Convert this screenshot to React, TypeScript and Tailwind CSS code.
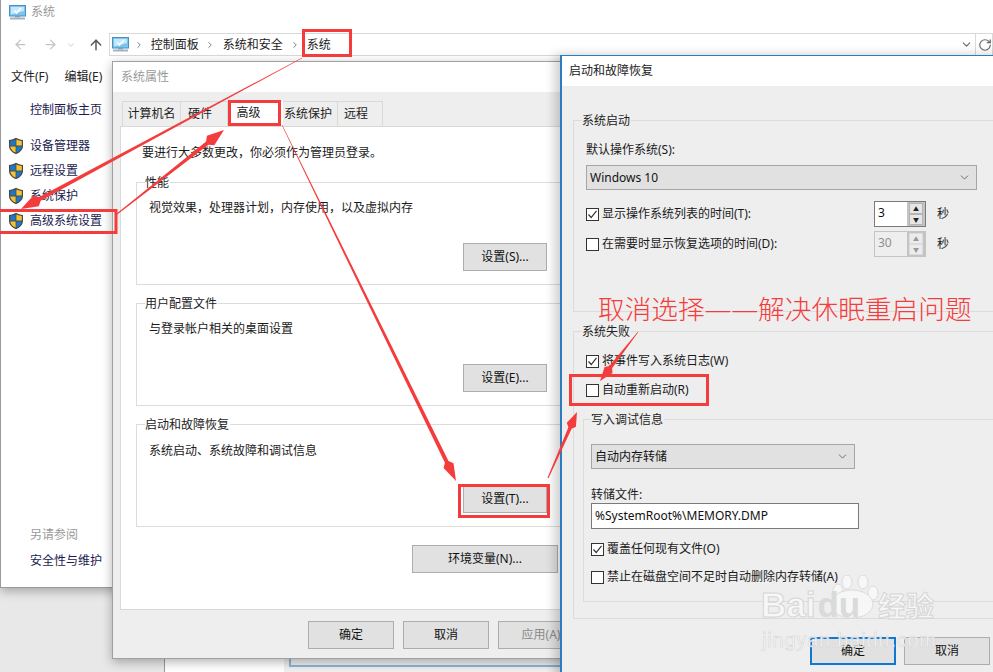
import React from "react";
import { ArrowLeft, ArrowRight, ArrowUp, ChevronDown, ChevronRight, RotateCw } from "lucide-react";

const FONT = "font-['Noto_Sans','Noto_Sans_CJK_SC',sans-serif]";

function Shield() {
  return (
    <svg width="16" height="18" viewBox="0 0 16 18" className="shrink-0">
      <path d="M8 .8 C10 2 12.5 2.8 15 3 V9 C15 13 11.5 15.8 8 17.2 C4.5 15.8 1 13 1 9 V3 C3.5 2.8 6 2 8 .8 Z" fill="#4a4a4a" />
      <path d="M7.6 2.4 C6 3.2 4 3.8 2.2 4 V8.6 H7.6 Z" fill="#1d78c8" />
      <path d="M8.4 2.4 C10 3.2 12 3.8 13.8 4 V8.6 H8.4 Z" fill="#f4c430" />
      <path d="M2.2 9.4 H7.6 V15.6 C5 14.6 2.6 12.4 2.2 9.4 Z" fill="#f4c430" />
      <path d="M8.4 9.4 H13.8 C13.4 12.4 11 14.6 8.4 15.6 Z" fill="#1d78c8" />
    </svg>
  );
}

function Monitor() {
  return (
    <svg width="17" height="15" viewBox="0 0 17 15" className="shrink-0">
      <rect x="0.5" y="0.5" width="16" height="10.5" fill="#7cc4ee" stroke="#4a90c0" />
      <path d="M2 2 H15 V6 L2 9.5 Z" fill="#c4e8fa" />
      <path d="M5.5 5.5 L7.5 8 L12 3" fill="none" stroke="#fff" strokeWidth="1.6" />
      <rect x="6" y="11" width="5" height="1.5" fill="#8aa0b0" />
      <rect x="1" y="12.5" width="15" height="2" fill="#9db4c4" />
    </svg>
  );
}

function SideItem({ label }: { label: string }) {
  return (
    <div className="flex h-[25px] items-center gap-[6px] pl-[7px] text-[#1b1b50]">
      <Shield />
      <span>{label}</span>
    </div>
  );
}

function Btn({ label, w = "w-[86px]", disabled = false, className = "" }: { label: string; w?: string; disabled?: boolean; className?: string }) {
  return (
    <div className={`flex h-[28px] shrink-0 items-center justify-center border border-[#adadad] bg-[#e1e1e1] ${w} ${disabled ? "text-[#8a8a8a]" : "text-[#111]"} ${className}`}>
      {label}
    </div>
  );
}

function Group({ legend, className = "", bg = "bg-white", legendLeft = "left-[8px]", children }: { legend: string; className?: string; bg?: string; legendLeft?: string; children?: React.ReactNode }) {
  return (
    <div className={`relative flex flex-col border border-[#dcdcdc] ${className}`}>
      <span className={`absolute -top-[8px] h-[16px] whitespace-nowrap leading-[16px] ${legendLeft} ${bg} pr-[1px] text-[#222]`}>{legend}</span>
      {children}
    </div>
  );
}

function Check({ checked = false, label, className = "" }: { checked?: boolean; label: string; className?: string }) {
  return (
    <div className={`flex items-center gap-[3px] whitespace-nowrap text-[#1a1a1a] ${className}`}>
      <span className="flex h-[13px] w-[13px] shrink-0 items-center justify-center border border-[#333] bg-white">
        {checked && (
          <svg width="11" height="11" viewBox="0 0 11 11">
            <path d="M1.5 5.5 L4.2 8.5 L9.5 1.8" fill="none" stroke="#333" strokeWidth="1.2" />
          </svg>
        )}
      </span>
      <span>{label}</span>
    </div>
  );
}

function Spin({ value, disabled = false }: { value: string; disabled?: boolean }) {
  const arrow = disabled ? "border-[#dcdcdc] bg-[#ececec] text-[#999]" : "border-[#b4b4b4] bg-[#e6e6e6] text-[#222]";
  return (
    <div className={`flex h-[26px] w-[52px] shrink-0 border ${disabled ? "border-[#c4c4c4] text-[#8f8f8f]" : "border-[#7a7a7a] text-[#111]"}`}>
      <div className={`flex flex-1 items-center pb-[2px] pl-[3px] ${disabled ? "" : "bg-white"}`}>{value}</div>
      <div className="flex w-[18px] flex-col border-l-2 border-r-2 border-[#c4c4c4] bg-[#c4c4c4] py-[1px]">
        <div className={`flex flex-1 items-center justify-center border text-[6px] leading-none ${arrow}`}>▲</div>
        <div className={`flex flex-1 items-center justify-center border text-[6px] leading-none ${arrow}`}>▼</div>
      </div>
    </div>
  );
}

function Select({ label, w, h }: { label: string; w: string; h: string }) {
  return (
    <div className={`flex items-center justify-between border border-[#a6a6a6] bg-[#e1e1e1] pl-[3px] pr-[5px] text-[#111] ${w} ${h}`}>
      <span>{label}</span>
      <ChevronDown size={13} strokeWidth={1.2} color="#333" />
    </div>
  );
}

function taper(x1: number, y1: number, x2: number, y2: number, w1: number, w2: number, hl: number, hw: number) {
  const dx = x2 - x1;
  const dy = y2 - y1;
  const len = Math.hypot(dx, dy);
  const ux = dx / len;
  const uy = dy / len;
  const nx = -uy;
  const ny = ux;
  const bx = x2 - ux * hl;
  const by = y2 - uy * hl;
  const sx = x2 - ux * hl * 1.25;
  const sy = y2 - uy * hl * 1.25;
  const p = (x: number, y: number) => `${x.toFixed(1)},${y.toFixed(1)}`;
  return [
    p(x1 + (nx * w1) / 2, y1 + (ny * w1) / 2),
    p(sx + (nx * w2) / 2, sy + (ny * w2) / 2),
    p(bx + (nx * hw) / 2, by + (ny * hw) / 2),
    p(x2, y2),
    p(bx - (nx * hw) / 2, by - (ny * hw) / 2),
    p(sx - (nx * w2) / 2, sy - (ny * w2) / 2),
    p(x1 - (nx * w1) / 2, y1 - (ny * w1) / 2),
  ].join(" ");
}

function Marks() {
  const arrows = [
    taper(302, 58, 21, 209, 0.4, 4, 17, 12),
    taper(117, 214, 224, 130, 1, 4, 17, 12),
    taper(282, 125, 456, 481, 0.6, 4, 17, 11),
    taper(548, 478, 577, 412, 1, 3.5, 14, 10),
    taper(638, 332, 600, 381, 0.6, 3.5, 14, 10),
  ];
  return (
    <svg width="993" height="672" viewBox="0 0 993 672" className="pointer-events-none absolute left-0 top-0">
      {arrows.map((pts) => (
        <polygon key={pts} points={pts} fill="#f53c3c" />
      ))}
      <g fill="none" stroke="#f53c3c" strokeWidth="3">
        <rect x="303.5" y="30.5" width="47" height="25" />
        <rect x="229.5" y="101.5" width="50" height="23" />
        <rect x="-2" y="210.5" width="118" height="22" />
        <rect x="459.5" y="485.5" width="89" height="31" />
        <rect x="570.5" y="375.5" width="137" height="29" />
      </g>
    </svg>
  );
}

function Watermark() {
  return (
    <div className="pointer-events-none absolute left-[760px] top-[575px] h-[76px] w-[182px] text-[#f8f8f8] opacity-90">
      <svg width="66" height="46" viewBox="0 0 66 46" className="absolute left-[68px] top-0" fill="#f8f8f8" stroke="#dadada" strokeWidth="1">
        <ellipse cx="10" cy="16" rx="5" ry="7" />
        <ellipse cx="19" cy="7" rx="5" ry="7" />
        <ellipse cx="35" cy="7" rx="5" ry="7" />
        <ellipse cx="45" cy="18" rx="5" ry="7" />
        <ellipse cx="24" cy="29" rx="21" ry="14" />
      </svg>
      <span className="absolute left-[1px] top-[10px] flex whitespace-nowrap font-['Liberation_Sans',sans-serif] text-[35px] font-bold leading-[40px] [-webkit-text-stroke:1px_#d4d4d4]">
        Bai<span className="ml-[2px] text-[#d8d8d8] [-webkit-text-stroke:0px]">du</span>
      </span>
      <span className="absolute left-[118px] top-[14px] whitespace-nowrap text-[28px] font-bold leading-[34px] [-webkit-text-stroke:1px_#d4d4d4]">经验</span>
      <span className="absolute left-[2px] top-[54px] whitespace-nowrap font-['Liberation_Sans',sans-serif] text-[20px] leading-[22px] tracking-[0.8px] [-webkit-text-stroke:0.6px_#d4d4d4]">jingyan.baidu.com</span>
    </div>
  );
}

export default function App() {
  return (
    <div className={`relative h-[672px] w-[993px] overflow-hidden bg-[#e8e8e8] text-[12px] leading-[16px] ${FONT}`}>
      {/* window behind everything */}
      <div className="absolute left-[164px] top-[580px] h-[100px] w-[840px] border-l border-[#9a9a9a] bg-white" />
      <div className="absolute left-[284px] top-[640px] h-[40px] w-[720px] bg-[#efefef]" />
      <div className="absolute left-[289px] top-[640px] h-[27px] w-[700px] border-b-2 border-l-2 border-[#8fb4d4] bg-[#efefef]" />

      {/* control panel window */}
      <div className="absolute left-0 top-0 flex h-[588px] w-[993px] flex-col border-b border-l border-[#9a9a9a] bg-white shadow-[0_3px_10px_rgba(0,0,0,0.3)]">
        <div className="flex h-[24px] items-center gap-[5px] pl-[8px] text-[#9a9a9a]">
          <Monitor />
          <span>系统</span>
        </div>
        <div className="flex h-[42px] items-start pt-[9px]">
          <div className="flex h-[23px] w-[108px] items-center text-[#c4c4c4]">
            <ArrowLeft size={15} strokeWidth={2} className="ml-[12px]" />
            <ArrowRight size={15} strokeWidth={2} className="ml-[15px]" />
            <ChevronDown size={10} strokeWidth={2} className="ml-[8px]" />
            <ArrowUp size={16} strokeWidth={2.2} className="ml-[12px] text-[#555]" />
          </div>
          <div className="flex h-[23px] w-[870px] items-center border border-[#d9d9d9] pl-[2px] text-[#222]">
            <Monitor />
            <ChevronRight size={10} strokeWidth={2} className="ml-[5px] text-[#666]" />
            <span className="ml-[7px]">控制面板</span>
            <ChevronRight size={10} strokeWidth={2} className="ml-[6px] text-[#666]" />
            <span className="ml-[8px]">系统和安全</span>
            <ChevronRight size={10} strokeWidth={2} className="ml-[7px] text-[#666]" />
            <span className="ml-[7px]">系统</span>
            <ChevronDown size={13} strokeWidth={2} className="ml-auto mr-[2px] text-[#666]" />
          </div>
          <div className="flex h-[23px] items-center border-b border-r border-t border-[#d9d9d9] pl-[2px]">
            <RotateCw size={14} className="text-[#666]" />
          </div>
        </div>
        <div className="flex h-[20px] items-center gap-[16px] pb-0 pl-[10px] pt-[2px] text-[#222]">
          <span>文件(F)</span>
          <span>编辑(E)</span>
        </div>
        <div className="mt-[16px] flex flex-1 flex-col pb-[18px]">
          <div className="pl-[29px] text-[#1b1b50]">控制面板主页</div>
          <div className="mt-[15px] flex flex-col">
            <SideItem label="设备管理器" />
            <SideItem label="远程设置" />
            <SideItem label="系统保护" />
            <SideItem label="高级系统设置" />
          </div>
          <div className="mt-auto pl-[29px] text-[#9a9a9a]">另请参阅</div>
          <div className="mt-[10px] pl-[29px] text-[#1b1b50]">安全性与维护</div>
        </div>
      </div>

      {/* system properties dialog */}
      <div className="absolute left-[112px] top-[61px] flex h-[598px] w-[470px] flex-col border border-[#a0a0a0] bg-[#eeeeee] shadow-[0_3px_10px_rgba(0,0,0,0.3)]">
        <div className="flex h-[30px] items-center bg-white pl-[8px] text-[#9a9a9a]">系统属性</div>
        <div className="ml-[9px] mt-[9px] flex h-[25px] items-stretch">
          <div className="flex w-[59px] items-center justify-center border border-b-0 border-[#d9d9d9] text-[#222]">计算机名</div>
          <div className="flex w-[47px] items-center justify-center border-r border-t border-[#d9d9d9] pr-[8px] text-[#222]">硬件</div>
          <div className="flex w-[55px] items-center justify-center bg-white pb-[1px] pr-[14px] text-[#222]">高级</div>
          <div className="flex w-[54px] items-center justify-center border-t border-[#d9d9d9] pr-[4px] text-[#222]">系统保护</div>
          <div className="flex w-[46px] items-center justify-center border-l border-r border-t border-[#d9d9d9] pr-[8px] text-[#222]">远程</div>
        </div>
        <div className="ml-[7px] flex h-[484px] w-[470px] flex-col border border-[#d9d9d9] bg-white">
          <div className="ml-[21px] mt-[18px] text-[#1a1a1a]">要进行大多数更改，你必须作为管理员登录。</div>
          <div className="ml-[15px] mt-[21px] flex flex-col gap-[18px]">
            <Group legend="性能" className="h-[103px] w-[430px]">
              <div className="ml-[12px] mt-[17px] text-[#1a1a1a]">视觉效果，处理器计划，内存使用，以及虚拟内存</div>
              <Btn label="设置(S)..." w="w-[84px]" className="ml-[326px] mt-[27px]" />
            </Group>
            <Group legend="用户配置文件" className="h-[103px] w-[430px]">
              <div className="ml-[12px] mt-[17px] text-[#1a1a1a]">与登录帐户相关的桌面设置</div>
              <Btn label="设置(E)..." w="w-[84px]" className="ml-[326px] mt-[27px]" />
            </Group>
            <Group legend="启动和故障恢复" className="h-[103px] w-[430px]">
              <div className="ml-[12px] mt-[18px] text-[#1a1a1a]">系统启动、系统故障和调试信息</div>
              <Btn label="设置(T)..." w="w-[84px]" className="ml-[326px] mt-[26px]" />
            </Group>
          </div>
          <Btn label="环境变量(N)..." w="w-[146px]" className="ml-[291px] mt-[18px]" />
        </div>
        <div className="ml-[195px] mt-[11px] flex gap-[9px]">
          <Btn label="确定" />
          <Btn label="取消" />
          <Btn label="应用(A)" disabled />
        </div>
      </div>

      {/* startup and recovery dialog */}
      <div className="absolute left-[560px] top-[55px] flex h-[630px] w-[445px] flex-col border-l-2 border-t border-[#2b7cc0] bg-[#eeeeee] shadow-[-5px_0_10px_rgba(0,0,0,0.2)]">
        <div className="flex h-[30px] items-center bg-white pl-[7px] text-[#222]">启动和故障恢复</div>
        <Group legend="系统启动" bg="bg-[#eeeeee]" className="ml-[11px] mt-[34px] h-[192px] w-[440px] pl-[12px]">
          <div className="mt-[21px] text-[#1a1a1a]">默认操作系统(S):</div>
          <Select label="Windows 10" w="w-[391px]" h="h-[25px] mt-[7px]" />
          <div className="mt-[11px] flex h-[26px] w-[391px] items-center">
            <div className="w-[288px]"><Check checked label="显示操作系统列表的时间(T):" /></div>
            <Spin value="3" />
            <span className="ml-[11px] text-[#222]">秒</span>
          </div>
          <div className="mt-[4px] flex h-[26px] w-[391px] items-center">
            <div className="w-[288px]"><Check label="在需要时显示恢复选项的时间(D):" /></div>
            <Spin value="30" disabled />
            <span className="ml-[11px] text-[#222]">秒</span>
          </div>
        </Group>
        <Group legend="系统失败" bg="bg-[#eeeeee]" className="ml-[11px] mt-[19px] h-[288px] w-[440px]">
          <Check checked label="将事件写入系统日志(W)" className="ml-[12px] mt-[21px]" />
          <Check label="自动重新启动(R)" className="ml-[12px] mt-[13px]" />
          <Group legend="写入调试信息" bg="bg-[#eeeeee]" legendLeft="left-[7px]" className="ml-[9px] mt-[21px] h-[183px] w-[430px] pl-[7px]">
            <Select label="自动内存转储" w="w-[264px]" h="h-[25px] mt-[24px]" />
            <div className="mt-[18px] text-[#1a1a1a]">转储文件:</div>
            <div className="flex h-[26px] w-[268px] items-center border border-[#7a7a7a] bg-white pl-[3px] text-[#111]">%SystemRoot%\MEMORY.DMP</div>
            <Check checked label="覆盖任何现有文件(O)" className="mt-[12px]" />
            <Check label="禁止在磁盘空间不足时自动删除内存转储(A)" className="mt-[12px]" />
          </Group>
        </Group>
        <div className="ml-[248px] mt-[18px] flex gap-[8px]">
          <div className="flex h-[28px] w-[86px] items-center justify-center border-2 border-[#0f78d4] bg-[#e1e1e1] text-[#111]">确定</div>
          <Btn label="取消" />
        </div>
      </div>

      <Marks />

      <div className="absolute left-[598px] top-[295px] whitespace-nowrap text-[26.7px] font-light leading-[27px] text-[#f53c3c]">取消选择——解决休眠重启问题</div>

      <Watermark />
    </div>
  );
}
